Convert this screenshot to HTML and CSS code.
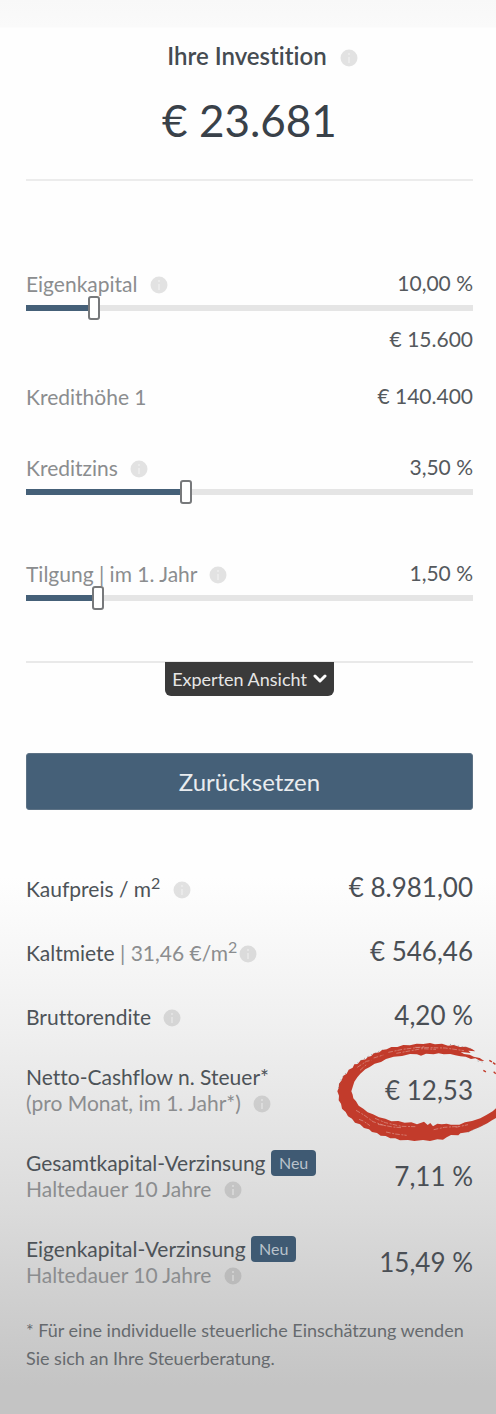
FILE: index.html
```
<!DOCTYPE html>
<html lang="de">
<head>
<meta charset="utf-8">
<meta name="viewport" content="width=device-width, initial-scale=1">
<title>Ihre Investition</title>
<link rel="stylesheet" href="styles.css">
</head>
<body>
<svg class="sprite" aria-hidden="true">
  <symbol id="info" viewBox="0 0 18 18">
    <circle cx="9" cy="9" r="8.5" fill="currentColor"/>
    <path d="M9 4v2M9 8v6" stroke="#fff" stroke-opacity=".3" stroke-width="2"/>
  </symbol>
</svg>
<main class="calculator">
  <header class="summary">
    <h1 class="summary-title">Ihre Investition <svg class="info"><use href="#info"/></svg></h1>
    <p class="summary-value">€ 23.681</p>
  </header>

  <form class="controls">
    <div class="control">
      <div class="row">
        <label class="muted" for="equity">Eigenkapital <svg class="info"><use href="#info"/></svg></label>
        <output class="amount" for="equity">10,00 %</output>
      </div>
      <input class="slider" id="equity" type="range" min="0" max="70" step="0.01" value="10" style="--fill: 15%">
    </div>
    <output class="amount equity-amount" for="equity">€ 15.600</output>
    <div class="row loan">
      <span class="muted">Kredithöhe 1</span>
      <span class="amount">€ 140.400</span>
    </div>
    <div class="control interest">
      <div class="row">
        <label class="muted" for="interest">Kreditzins <svg class="info"><use href="#info"/></svg></label>
        <output class="amount" for="interest">3,50 %</output>
      </div>
      <input class="slider" id="interest" type="range" min="0" max="9.9" step="0.01" value="3.5" style="--fill: 36%">
    </div>
    <div class="control repayment">
      <div class="row">
        <label class="muted" for="repayment">Tilgung | im 1. Jahr <svg class="info"><use href="#info"/></svg></label>
        <output class="amount" for="repayment">1,50 %</output>
      </div>
      <input class="slider" id="repayment" type="range" min="0" max="9.9" step="0.01" value="1.5" style="--fill: 16%">
    </div>
    <div class="expert">
      <button class="expert-toggle" type="button">Experten Ansicht
        <svg class="chevron" viewBox="0 0 14 10" aria-hidden="true"><path d="M2 2l5 5 5-5" fill="none" stroke="currentColor" stroke-width="3" stroke-linecap="round" stroke-linejoin="round"/></svg>
      </button>
    </div>
    <button class="reset" type="reset">Zurücksetzen</button>
  </form>

  <section class="results">
    <div class="result">
      <div class="caption">Kaufpreis / m<sup>2</sup> <svg class="info"><use href="#info"/></svg></div>
      <div class="figure">€ 8.981,00</div>
    </div>
    <div class="result">
      <div class="caption">Kaltmiete <span class="muted">| 31,46 €/m<sup>2</sup></span><svg class="info info-tight"><use href="#info"/></svg></div>
      <div class="figure">€ 546,46</div>
    </div>
    <div class="result">
      <div class="caption">Bruttorendite <svg class="info"><use href="#info"/></svg></div>
      <div class="figure">4,20 %</div>
    </div>
    <div class="result result-tall">
      <div>Netto-Cashflow n. Steuer*<br><span class="muted">(pro Monat, im 1. Jahr*) <svg class="info"><use href="#info"/></svg></span></div>
      <div class="figure marked">€ 12,53
        <svg class="marker" viewBox="0 0 528 360" aria-hidden="true">
          <path fill="#c23b2b" d="M456 57L438 50L420 51L401 45L384 47L366 41L345 43L330 39L310 42L290 41L270 46L250 45L232 51L214 51L200 58L186 60L178 67L161 70L154 78L143 81L137 88L122 91L113 102L103 103L98 113L86 119L80 131L70 137L65 151L57 161L56 174L52 184L57 197L56 211L63 221L66 236L77 246L84 259L96 266L105 278L120 283L132 294L147 298L156 306L171 309L182 317L197 318L211 325L226 325L240 331L264 330L283 333L309 330L330 333L352 328L369 329L380 322L393 315L415 316L421 310L446 306L458 300L480 291L502 280L516 271L534 261V229L518 244L499 255L481 265L456 273L435 277L418 284L393 284L380 281L365 283L352 281L339 289L331 279L323 285L312 275L291 283L274 277L254 278L235 273L214 274L196 266L177 262L159 253L143 247L130 236L116 227L108 214L100 205L98 194L94 184L98 171L103 155L112 142L121 131L136 118L149 111L164 101L183 96L198 87L221 80L246 78L270 72L291 73L303 77L318 71L341 73L356 70L371 73L391 72L406 76L421 79L437 80L453 87L466 85L480 92L493 93L479 84L461 80L449 74L432 72L422 66L452 69L445 62L466 64Z"/>
          <path fill="none" stroke="#c23b2b" stroke-width="4" stroke-dasharray="9 4" d="M508 91l10 6 16 12M490 121l10 6M521 125l13 13"/>
          <g fill="none" stroke="#e0a29a" stroke-opacity=".6" stroke-width="3" stroke-dasharray="14 5 6 3">
            <path d="M205 67l43-9 67-8M229 70l77-14 42 2M285 52l91 2 56 8M112 112l27-18 15-3M120 121l20-18M161 84l29-9"/>
            <path d="M108 241l24 14 27 20 39 13M165 265l31 13 48 11 42 1M174 283l45 8 24 2M198 306l28 6 34 4M117 268l13 5 20 14M341 299l32-7 44-3M407 292l37-8"/>
          </g>
          <path fill="none" stroke="#777" stroke-width="2" stroke-dasharray="3 9" d="M112 99l28-18 47-22M56 174l8-28 16-20M390 43l65 13M473 93l20 4M445 306l50-25"/>
        </svg>
      </div>
    </div>
    <div class="result result-tall">
      <div>Gesamtkapital-Verzinsung <span class="badge">Neu</span><br><span class="muted">Haltedauer 10 Jahre <svg class="info"><use href="#info"/></svg></span></div>
      <div class="figure">7,11 %</div>
    </div>
    <div class="result result-tall">
      <div>Eigenkapital-Verzinsung <span class="badge">Neu</span><br><span class="muted">Haltedauer 10 Jahre <svg class="info"><use href="#info"/></svg></span></div>
      <div class="figure">15,49 %</div>
    </div>
  </section>
  <p class="footnote">* Für eine individuelle steuerliche Einschätzung wenden Sie sich an Ihre Steuerberatung.</p>
</main>
</body>
</html>
```
FILE: styles.css
```
* { box-sizing: border-box; }
body {
  margin: 0;
  font-family: Lato, "Noto Sans", sans-serif;
  font-size: 21px;
  line-height: 26px;
  font-variant-ligatures: none;
  color: #4d5358;
  background: linear-gradient(#fefefe 62%, #f6f6f6 68%, #efefef 73%, #dadada 86%, #c4c4c4 98%);
}
.sprite { position: absolute; width: 0; height: 0; }
.calculator {
  padding: 41px 23px 42px 26px;
  overflow-x: clip;
  background: linear-gradient(#f8f8f8, #fafafa 27px, transparent 28px);
}
.muted { color: #8b8d8f; }
.info {
  width: 18px;
  height: 18px;
  margin-left: 7px;
  vertical-align: -2px;
  color: rgba(0, 0, 0, .11);
}
.info-tight { margin-left: 2px; }

.summary {
  display: flex;
  flex-direction: column;
  align-items: center;
  height: 140px;
  border-bottom: 2px solid #ececec;
}
.summary-title {
  margin: 0;
  padding-left: 26px;
  font-size: 24px;
  line-height: 30px;
  font-weight: 600;
  color: #454b51;
}
.summary-value {
  margin: 21px 0 0;
  font-size: 44px;
  line-height: 56px;
  color: #394149;
}

.controls { display: flex; flex-direction: column; padding-top: 89px; }
.row { display: flex; justify-content: space-between; }
.row .muted { padding-top: 1px; }
.amount { color: #55595d; }
.control { display: flex; flex-direction: column; }
.equity-amount { align-self: flex-end; margin-top: 6px; }
.loan { margin-top: 31px; }
.interest { margin-top: 44px; }
.repayment { margin-top: 56px; }
.slider {
  appearance: none;
  width: 100%;
  height: 24px;
  margin: -1px 0 0;
  background: linear-gradient(#456078, #456078) left center / var(--fill) 6px no-repeat,
    linear-gradient(#e5e5e5, #e5e5e5) center / 100% 6px no-repeat;
}
.slider::-webkit-slider-thumb {
  appearance: none;
  width: 12px;
  height: 24px;
  border: 2px solid #77797b;
  border-radius: 3px;
  background: #fff;
}

.expert {
  display: flex;
  justify-content: center;
  margin-top: 51px;
  border-top: 2px solid #e9e9e9;
}
.expert-toggle {
  display: flex;
  align-items: center;
  gap: 6px;
  height: 34px;
  margin-top: -1px;
  padding: 0 7px;
  border: 0;
  border-radius: 0 0 6px 6px;
  font: 18px/24px Lato, "Noto Sans", sans-serif;
  color: #e6e6e6;
  background: #3a3a3a;
}
.chevron { width: 14px; height: 10px; color: #fff; }
.reset {
  height: 57px;
  margin-top: 57px;
  border: 1px solid #5d7285;
  border-radius: 3px;
  font: 24px/30px Lato, "Noto Sans", sans-serif;
  color: #e9ecef;
  background: #456078;
}

.results { padding-top: 45px; }
.result {
  display: flex;
  align-items: center;
  justify-content: space-between;
  height: 64px;
}
.result-tall { height: 86px; }
.caption { padding-top: 3px; }
.result sup { font-size: 16px; line-height: 0; }
.figure { font-size: 26px; line-height: 32px; color: #4a4f55; }
.marked { position: relative; }
.marker {
  position: absolute;
  right: -23px;
  top: -44px;
  width: 176px;
  height: 120px;
}
.badge {
  display: inline-block;
  height: 26px;
  padding: 0 8px;
  border-radius: 4px;
  font-size: 16px;
  vertical-align: top;
  color: #b9c2cb;
  background: #3f5a73;
}
.footnote { margin: 11px 0 0; font-size: 18px; line-height: 28px; color: #666a6e; }
```
